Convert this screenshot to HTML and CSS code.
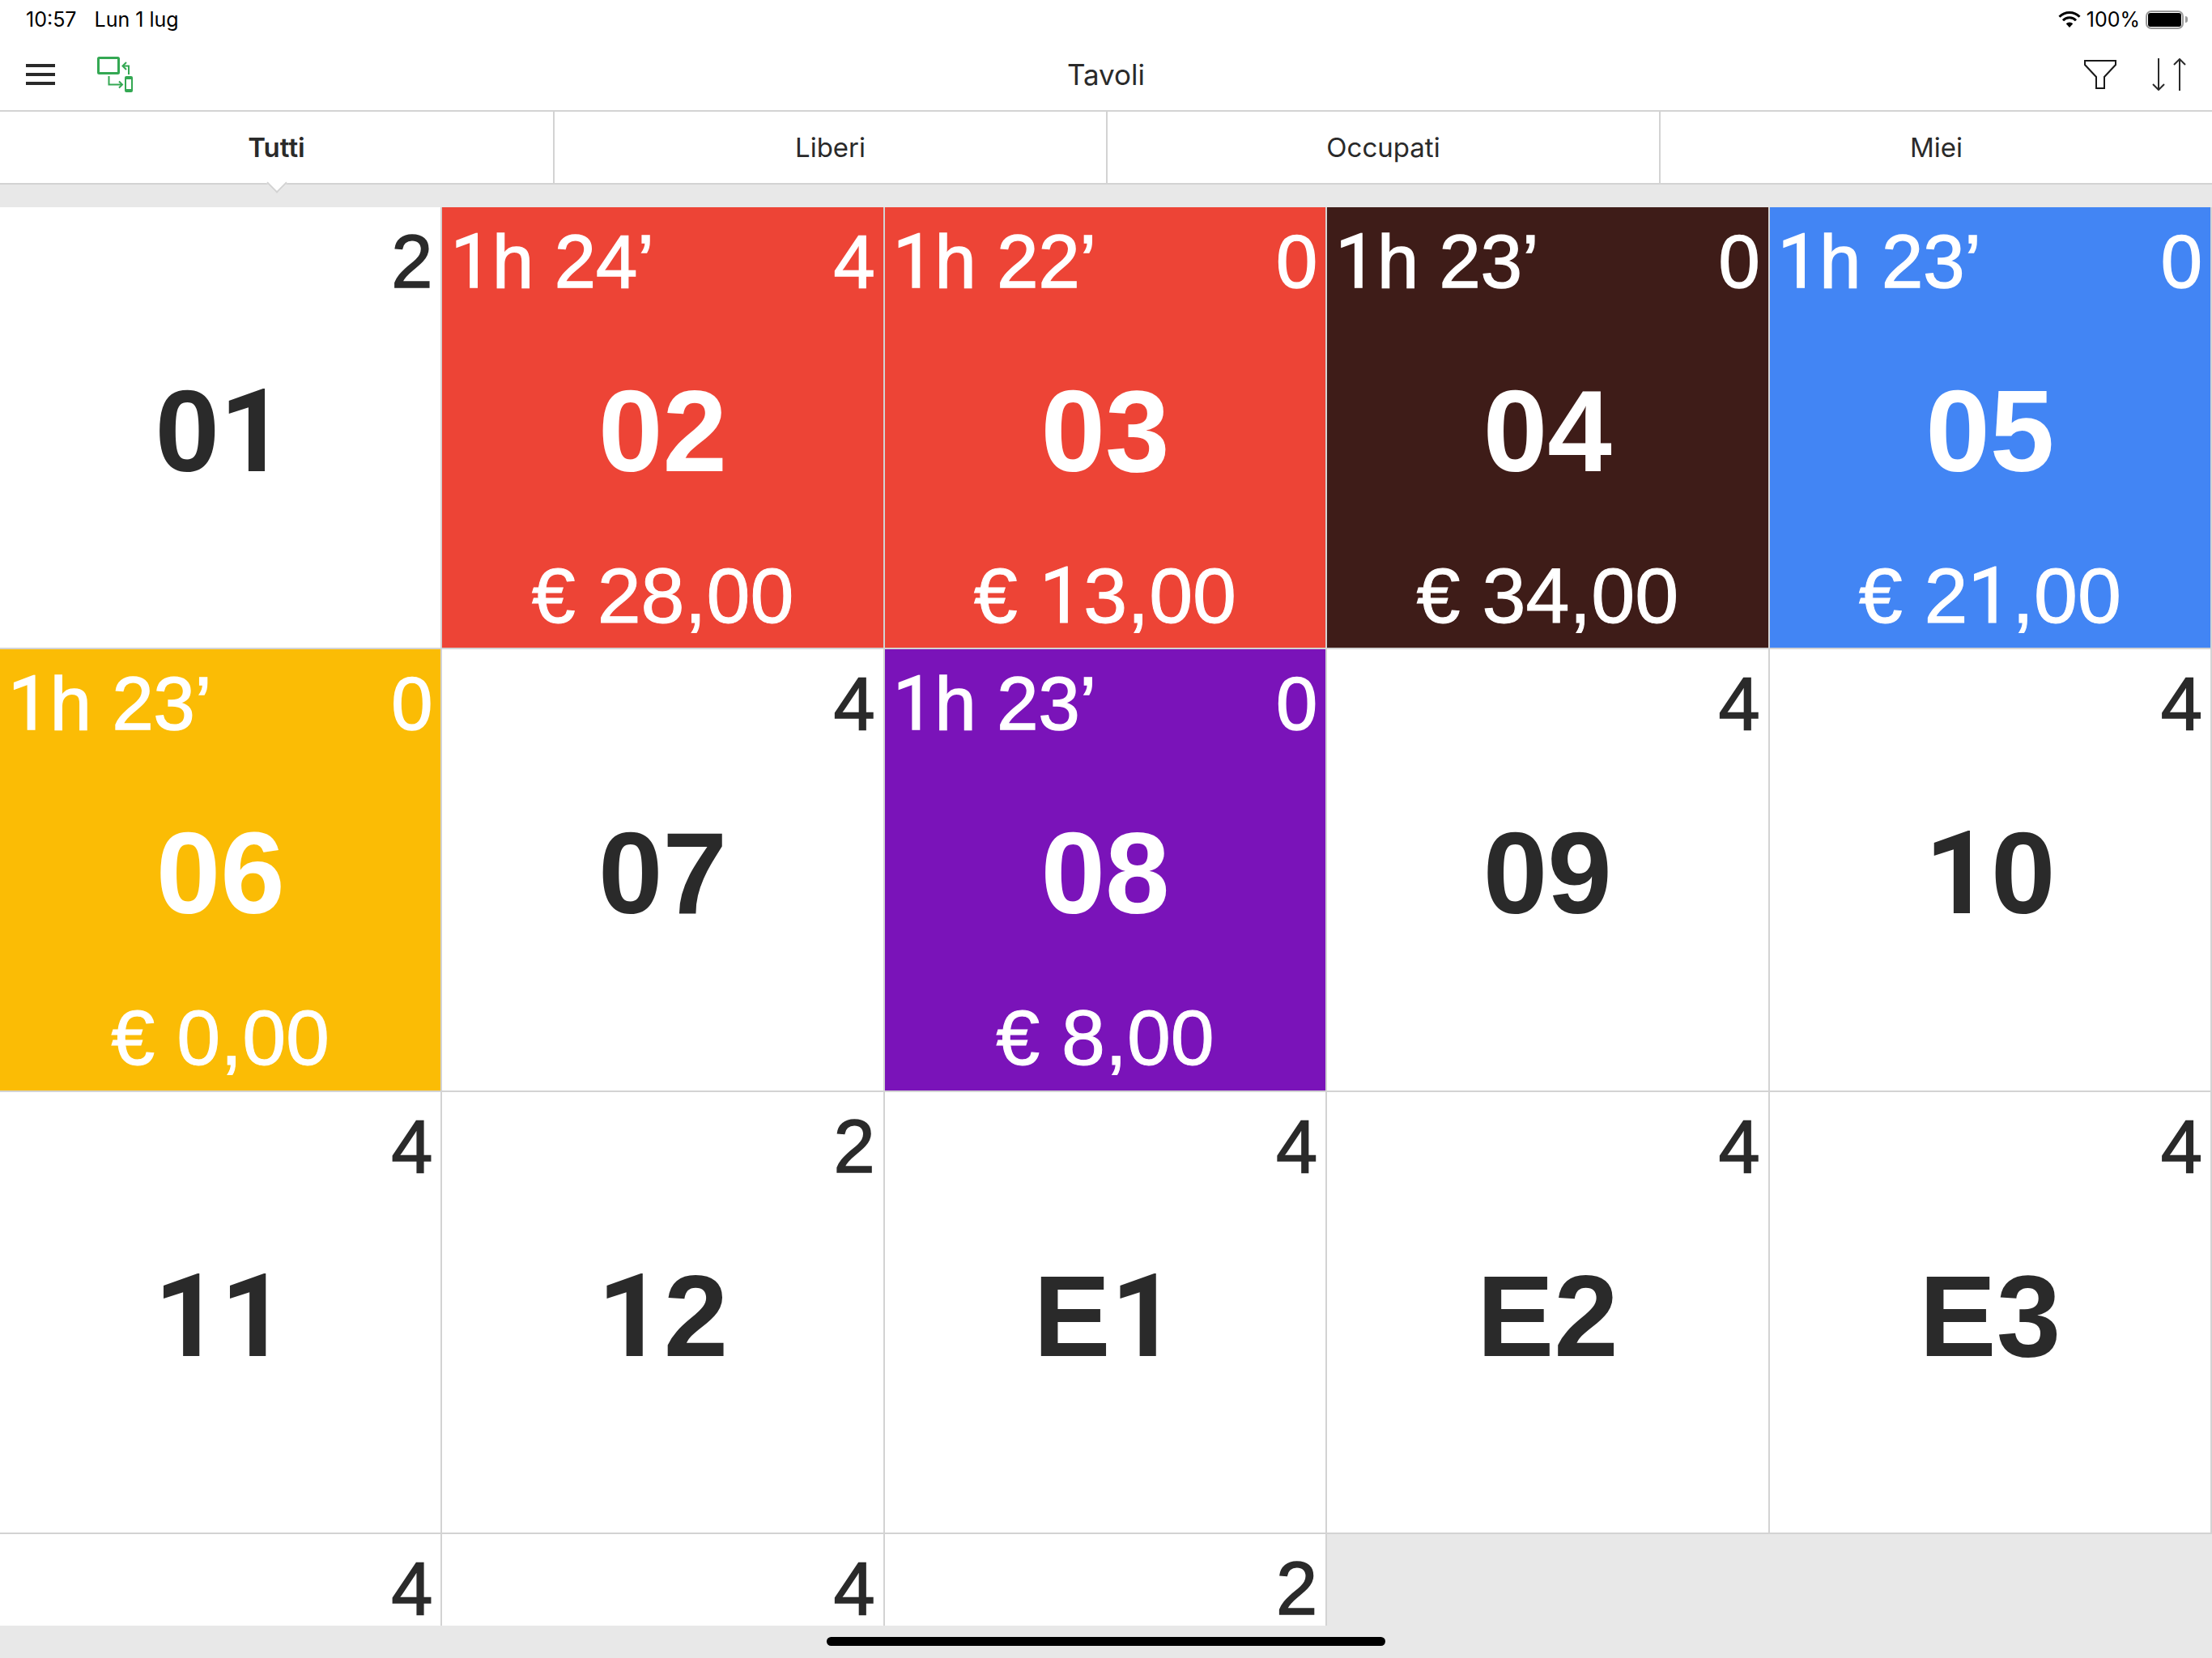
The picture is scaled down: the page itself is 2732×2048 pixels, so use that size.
FILE: index.html
```html
<!DOCTYPE html>
<html lang="it">
<head>
    <meta charset="UTF-8">
    <meta name="viewport" content="width=device-width, initial-scale=1.0">
    <title>Tavoli</title>
    <link rel="stylesheet" href="styles.css">
</head>
<body>
    <div class="status-bar">
        <div class="status-left">
            <span>10:57</span>
            <span>Lun 1 lug</span>
        </div>
        <div class="status-right">
            <svg class="wifi" width="28" height="20" viewBox="0 0 28 20">
                <path d="M14 20 L9.700 15.300 A6.300 6.300 0 0 1 18.300 15.300 Z" fill="#000"/>
                <path d="M6 11.300 A11 11 0 0 1 22 11.300" fill="none" stroke="#000" stroke-width="3"/>
                <path d="M1.500 6.800 A17.500 17.500 0 0 1 26.500 6.800" fill="none" stroke="#000" stroke-width="3"/>
            </svg>
            <span>100%</span>
            <div class="battery"><div class="battery-fill"></div></div>
            <div class="battery-cap"></div>
        </div>
    </div>

    <div class="nav-bar">
        <div class="nav-left">
            <div class="menu-icon"><span></span><span></span><span></span></div>
            <svg class="switch-icon" width="44" height="44" viewBox="0 0 44 44" fill="none" stroke="#34a853">
                <rect x="1.500" y="1.500" width="25" height="19" rx="1" stroke-width="3"/>
                <path d="M39 22 V11.500 H32" stroke-width="2"/>
                <path d="M36 7 L31.500 11.500 L36 16" stroke-width="2"/>
                <path d="M14.500 24 V34.500 H31" stroke-width="2"/>
                <path d="M27 30.500 L31 34.500 L27 38.500" stroke-width="2"/>
                <rect x="35" y="25" width="8" height="18" rx="1" stroke-width="2"/>
                <path d="M35 26.500 H43 M35 41.500 H43" stroke-width="3"/>
            </svg>
        </div>
        <div class="nav-title">Tavoli</div>
        <div class="nav-right">
            <svg width="40" height="36" viewBox="0 0 40 36" fill="none" stroke="#1a1a1a" stroke-width="2">
                <path d="M1 1 H39 V6 L25 21 V35 H15 V21 L1 6 Z"/>
            </svg>
            <svg width="42" height="40" viewBox="0 0 42 40" fill="none" stroke="#2a2a2a" stroke-width="2">
                <path d="M8 0 V39 M1 32 L8 39 L15 32"/>
                <path d="M34 40 V1 M27 8 L34 1 L41 8"/>
            </svg>
        </div>
    </div>

    <div class="tabs">
        <div class="tab active">Tutti</div>
        <div class="tab">Liberi</div>
        <div class="tab">Occupati</div>
        <div class="tab">Miei</div>
    </div>
    <div class="tabs-gap"></div>

    <div class="tables">
        <div class="table-cell">
            <div class="cell-top"><span></span><span>2</span></div>
            <div class="cell-name">0<i>1</i></div>
        </div>
        <div class="table-cell busy red">
            <div class="cell-top"><span><i>1</i>h 24’</span><span>4</span></div>
            <div class="cell-name">02</div>
            <div class="cell-price">€ 28,00</div>
        </div>
        <div class="table-cell busy red">
            <div class="cell-top"><span><i>1</i>h 22’</span><span>0</span></div>
            <div class="cell-name">03</div>
            <div class="cell-price">€ <i>1</i>3,00</div>
        </div>
        <div class="table-cell busy brown">
            <div class="cell-top"><span><i>1</i>h 23’</span><span>0</span></div>
            <div class="cell-name">04</div>
            <div class="cell-price">€ 34,00</div>
        </div>
        <div class="table-cell busy blue">
            <div class="cell-top"><span><i>1</i>h 23’</span><span>0</span></div>
            <div class="cell-name">05</div>
            <div class="cell-price">€ 2<i>1</i>,00</div>
        </div>

        <div class="table-cell busy yellow">
            <div class="cell-top"><span><i>1</i>h 23’</span><span>0</span></div>
            <div class="cell-name">06</div>
            <div class="cell-price">€ 0,00</div>
        </div>
        <div class="table-cell">
            <div class="cell-top"><span></span><span>4</span></div>
            <div class="cell-name">07</div>
        </div>
        <div class="table-cell busy purple">
            <div class="cell-top"><span><i>1</i>h 23’</span><span>0</span></div>
            <div class="cell-name">08</div>
            <div class="cell-price">€ 8,00</div>
        </div>
        <div class="table-cell">
            <div class="cell-top"><span></span><span>4</span></div>
            <div class="cell-name">09</div>
        </div>
        <div class="table-cell">
            <div class="cell-top"><span></span><span>4</span></div>
            <div class="cell-name"><i>1</i>0</div>
        </div>

        <div class="table-cell">
            <div class="cell-top"><span></span><span>4</span></div>
            <div class="cell-name"><i>11</i></div>
        </div>
        <div class="table-cell">
            <div class="cell-top"><span></span><span>2</span></div>
            <div class="cell-name"><i>1</i>2</div>
        </div>
        <div class="table-cell">
            <div class="cell-top"><span></span><span>4</span></div>
            <div class="cell-name">E<i>1</i></div>
        </div>
        <div class="table-cell">
            <div class="cell-top"><span></span><span>4</span></div>
            <div class="cell-name">E2</div>
        </div>
        <div class="table-cell">
            <div class="cell-top"><span></span><span>4</span></div>
            <div class="cell-name">E3</div>
        </div>

        <div class="table-cell last-row">
            <div class="cell-top"><span></span><span>4</span></div>
        </div>
        <div class="table-cell last-row">
            <div class="cell-top"><span></span><span>4</span></div>
        </div>
        <div class="table-cell last-row">
            <div class="cell-top"><span></span><span>2</span></div>
        </div>
    </div>

    <div class="home-area"><div class="home-bar"></div></div>
</body>
</html>
```

FILE: styles.css
```css
html, body {
    margin: 0;
    padding: 0;
    height: 100%;
    overflow: hidden;
}

body {
    width: 2732px;
    height: 2048px;
    font-family: "Liberation Sans", Arial, sans-serif;
    background-color: #e8e8e8;
    color: #2a2a2a;
}

.status-bar {
    height: 48px;
    padding: 0 30px 0 32px;
    display: flex;
    justify-content: space-between;
    align-items: center;
    background-color: #fff;
    font-family: Inter, sans-serif;
    font-size: 25px;
    color: #000;
}

.status-left {
    display: flex;
    gap: 22px;
}

.status-right {
    display: flex;
    align-items: center;
    gap: 7px;
}

.battery {
    width: 41px;
    height: 17px;
    padding: 1px;
    border: 2px solid #999;
    border-radius: 7px;
}

.battery-fill {
    width: 100%;
    height: 100%;
    background-color: #000;
    border-radius: 3px;
}

.battery-cap {
    width: 3px;
    height: 8px;
    margin-left: -5px;
    background-color: #999;
    border-radius: 0 3px 3px 0;
}

.nav-bar {
    height: 88px;
    padding: 0 32px;
    display: flex;
    justify-content: space-between;
    align-items: center;
    position: relative;
    background-color: #fff;
    border-bottom: 2px solid #d3d3d3;
}

.nav-left {
    width: 400px;
    display: flex;
    align-items: center;
    gap: 52px;
}

.menu-icon {
    width: 36px;
    display: flex;
    flex-direction: column;
    gap: 7px;
}

.menu-icon span {
    height: 4px;
    background-color: #2a2a2a;
}

.nav-title {
    font-family: Inter, sans-serif;
    font-size: 35px;
}

.nav-right {
    width: 400px;
    display: flex;
    justify-content: flex-end;
    align-items: center;
    gap: 44px;
}

.tabs {
    height: 88px;
    display: grid;
    grid-template-columns: repeat(4, 1fr);
    background-color: #fff;
    border-bottom: 2px solid #d3d3d3;
}

.tab {
    display: flex;
    justify-content: center;
    align-items: center;
    position: relative;
    font-family: Inter, sans-serif;
    font-size: 33px;
}

.tab + .tab {
    border-left: 2px solid #d3d3d3;
}

.tab.active {
    font-weight: 600;
}

.tab.active::after {
    content: "";
    position: absolute;
    left: 50%;
    bottom: -9px;
    width: 18px;
    height: 18px;
    margin-left: -9px;
    box-sizing: border-box;
    background-color: #fff;
    border-right: 2px solid #d3d3d3;
    border-bottom: 2px solid #d3d3d3;
    transform: rotate(45deg);
}

.tabs-gap {
    height: 28px;
}

.tables {
    height: 1752px;
    display: grid;
    grid-template-columns: repeat(5, 546.4px);
    grid-template-rows: repeat(3, 546.4px) 112.8px;
}

.table-cell {
    box-sizing: border-box;
    padding: 21px 10px 0;
    display: grid;
    grid-template-rows: 92px 144px 100px;
    row-gap: 92px;
    align-content: start;
    background-color: #fff;
    border-right: 2px solid #d3d3d3;
    border-bottom: 2px solid #d3d3d3;
}

/* the 1 in Liberation has a foot, the Roboto one does not */
.table-cell i {
    font-family: Roboto, sans-serif;
    font-style: normal;
    line-height: 0;
}

.last-row {
    border-bottom: none;
}

.cell-top {
    display: flex;
    justify-content: space-between;
    font-size: 92px;
    line-height: 92px;
    -webkit-text-stroke: 1.5px currentColor;
}

.cell-name {
    text-align: center;
    font-size: 143px;
    line-height: 144px;
    font-weight: 700;
}

.cell-price {
    margin-top: -11px;
    text-align: center;
    font-size: 97px;
    line-height: 100px;
    -webkit-text-stroke: 1px currentColor;
}

.busy {
    color: #fff;
}

.red {
    background-color: #ed4436;
}

.brown {
    background-color: #3e1c18;
}

.blue {
    background-color: #4285f4;
}

.yellow {
    background-color: #fbbc05;
}

.purple {
    background-color: #7a13b9;
}

.home-area {
    position: absolute;
    left: 0;
    right: 0;
    top: 2008px;
    height: 40px;
    display: flex;
    justify-content: center;
    padding-top: 14px;
    box-sizing: border-box;
}

.home-bar {
    width: 690px;
    height: 11px;
    background-color: #000;
    border-radius: 6px;
}
```
